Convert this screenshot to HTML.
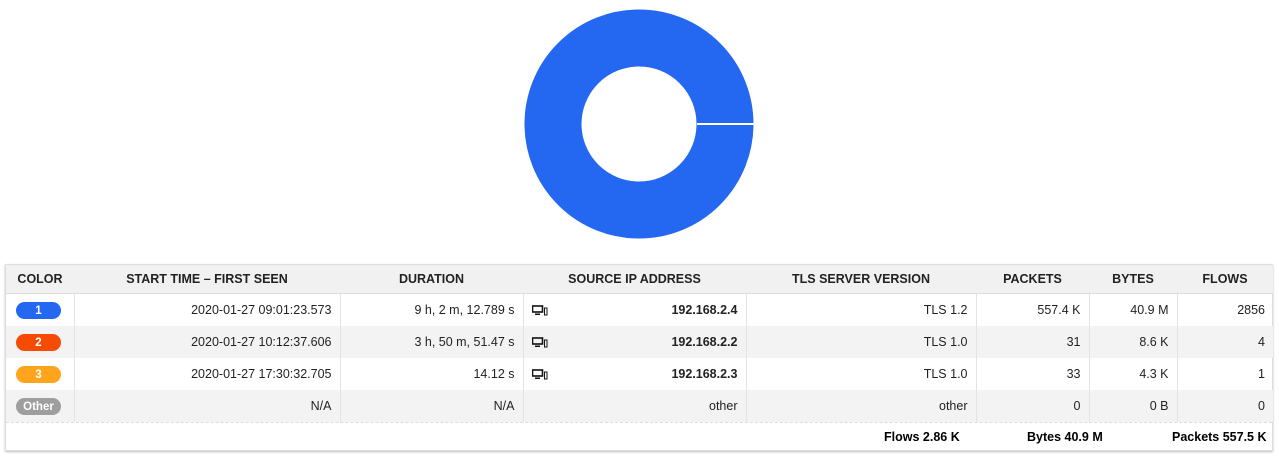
<!DOCTYPE html>
<html><head><style>
body{margin:0;width:1279px;height:460px;background:#fff;font-family:"Liberation Sans",sans-serif;position:relative;overflow:hidden}
.tbl{position:absolute;left:5px;top:264px;width:1268px;height:187px;border:1px solid #ddd;box-shadow:0 1px 2px rgba(0,0,0,.25);box-sizing:border-box}
table{border-collapse:collapse;width:1267px;table-layout:fixed;font-size:12.5px;color:#222}
th{height:27px;background:#f1f1f1;font-weight:bold;font-size:12.5px;text-align:center;border-bottom:1px solid #ddd;padding:0 0 1px 0}
td{height:32px;padding:0 8px;text-align:right;border-left:1px solid #e3e3e3}
td:first-child{border-left:none;text-align:left;padding-left:10px}
tr.g td{background:#f3f3f3}
.b{display:inline-block;width:45px;height:17px;border-radius:9px;color:#fff;font-weight:bold;font-size:11.5px;text-align:center;line-height:18px;vertical-align:middle}
.foot{position:absolute;top:157px;left:0;right:0;height:29px;border-top:1px dashed #ddd;font-size:12.5px;font-weight:bold}
.foot span{position:absolute;top:7px}
.ic{float:left;margin-top:2px}
</style></head><body>
<svg width="1279" height="260" style="position:absolute;left:0;top:0">
<circle cx="639" cy="124" r="86" fill="none" stroke="#2468f2" stroke-width="57"/>
<line x1="697" y1="124" x2="754" y2="124" stroke="#fff" stroke-width="2"/>
</svg>
<div class="tbl">
<table>
<colgroup><col style="width:68px"><col style="width:266px"><col style="width:183px"><col style="width:223px"><col style="width:230px"><col style="width:113px"><col style="width:88px"><col style="width:96px"></colgroup>
<tr><th>COLOR</th><th>START TIME – FIRST SEEN</th><th>DURATION</th><th>SOURCE IP ADDRESS</th><th>TLS SERVER VERSION</th><th>PACKETS</th><th>BYTES</th><th>FLOWS</th></tr>
<tr><td><span class="b" style="background:#2468f2">1</span></td><td>2020-01-27 09:01:23.573</td><td>9 h, 2 m, 12.789 s</td><td><svg class="ic" width="16" height="11"><rect x="0.5" y="1" width="10" height="6" fill="none" stroke="#111" stroke-width="1.6"/><rect x="3" y="8.5" width="5" height="1.5" fill="#111"/><rect x="12.5" y="3" width="2.5" height="7" fill="none" stroke="#111" stroke-width="1"/></svg><b>192.168.2.4</b></td><td>TLS 1.2</td><td>557.4 K</td><td>40.9 M</td><td>2856</td></tr>
<tr class="g"><td><span class="b" style="background:#f64b05">2</span></td><td>2020-01-27 10:12:37.606</td><td>3 h, 50 m, 51.47 s</td><td><svg class="ic" width="16" height="11"><rect x="0.5" y="1" width="10" height="6" fill="none" stroke="#111" stroke-width="1.6"/><rect x="3" y="8.5" width="5" height="1.5" fill="#111"/><rect x="12.5" y="3" width="2.5" height="7" fill="none" stroke="#111" stroke-width="1"/></svg><b>192.168.2.2</b></td><td>TLS 1.0</td><td>31</td><td>8.6 K</td><td>4</td></tr>
<tr><td><span class="b" style="background:#ffa41c">3</span></td><td>2020-01-27 17:30:32.705</td><td>14.12 s</td><td><svg class="ic" width="16" height="11"><rect x="0.5" y="1" width="10" height="6" fill="none" stroke="#111" stroke-width="1.6"/><rect x="3" y="8.5" width="5" height="1.5" fill="#111"/><rect x="12.5" y="3" width="2.5" height="7" fill="none" stroke="#111" stroke-width="1"/></svg><b>192.168.2.3</b></td><td>TLS 1.0</td><td>33</td><td>4.3 K</td><td>1</td></tr>
<tr class="g"><td><span class="b" style="background:#9e9e9e">Other</span></td><td>N/A</td><td>N/A</td><td>other</td><td>other</td><td>0</td><td>0 B</td><td>0</td></tr>
</table>
<div class="foot"><span style="left:878px">Flows 2.86 K</span><span style="left:1021px">Bytes 40.9 M</span><span style="left:1166px">Packets 557.5 K</span></div>
</div>
</body></html>
